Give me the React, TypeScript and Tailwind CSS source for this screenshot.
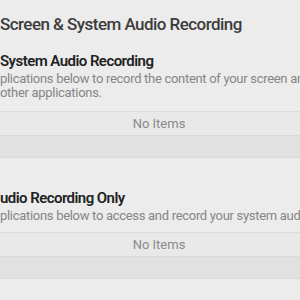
export default function App() {
  const font = { fontFamily: 'Roboto, "Noto Sans", sans-serif' };
  return (
    <div className="w-[300px] h-[300px] overflow-hidden bg-[#ececec]" style={font}>
      <div className="pt-[14px] text-[17px] leading-[20px] font-medium tracking-[-0.55px] text-[#3c3c3c] whitespace-nowrap">
        Screen &amp; System Audio Recording
      </div>
      <div className="mt-[18px] text-[15px] leading-[18px] font-semibold tracking-[-0.55px] text-[#222222] whitespace-nowrap">
        System Audio Recording
      </div>
      <div className="mt-[2px] text-[13px] leading-[14px] tracking-[-0.3px] text-[#868686] whitespace-nowrap">
        <div>plications below to record the content of your screen and audio, even while using</div>
        <div>other applications.</div>
      </div>
      <div className="mt-[11px] w-[318px] border-t border-[#dcdcdc]">
        <div className="h-[24px] flex items-center justify-center bg-[#e9e9e9] text-[13px] text-[#8a8a8a] border-b border-[#d9d9d9]">
          No Items
        </div>
        <div className="h-[22px] bg-[#e1e1e1] border-b border-[#d9d9d9]"></div>
      </div>
      <div className="mt-[31px] text-[15px] leading-[18px] font-semibold tracking-[-0.55px] text-[#222222] whitespace-nowrap">
        udio Recording Only
      </div>
      <div className="mt-[2px] text-[13px] leading-[14px] tracking-[-0.3px] text-[#868686] whitespace-nowrap">
        <div>plications below to access and record your system audio.</div>
      </div>
      <div className="mt-[9px] w-[318px] border-t border-[#dcdcdc]">
        <div className="h-[24px] flex items-center justify-center bg-[#e9e9e9] text-[13px] text-[#8a8a8a] border-b border-[#d9d9d9]">
          No Items
        </div>
        <div className="h-[22px] bg-[#e1e1e1] border-b border-[#d9d9d9]"></div>
      </div>
    </div>
  );
}
